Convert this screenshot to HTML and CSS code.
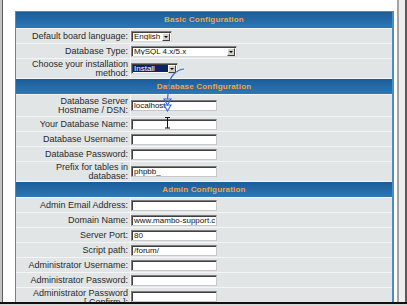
FILE: index.html
```html
<!DOCTYPE html>
<html>
<head>
<meta charset="utf-8">
<link rel="stylesheet" href="styles.css">
</head>
<body>
<div class="screen">
  <div class="main">
    <div class="edge-left"></div>
    <div class="content">
      <div class="cfg">
        <div class="hdr">Basic Configuration</div>
        <div class="lbl">Default board language:</div>
        <div class="val"><span class="sel w-en"><span class="opt">English</span><span class="btn"></span></span></div>
        <div class="lbl">Database Type:</div>
        <div class="val"><span class="sel w-db"><span class="opt">MySQL 4.x/5.x</span><span class="btn"></span></span></div>
        <div class="lbl tall">Choose your installation<br>method:</div>
        <div class="val tall"><span class="sel w-in"><span class="opt hl">Install</span><span class="btn"></span></span></div>

        <div class="hdr">Database Configuration</div>
        <div class="lbl tall2">Database Server<br>Hostname / DSN:</div>
        <div class="val tall2"><span class="inp">localhost</span></div>
        <div class="lbl">Your Database Name:</div>
        <div class="val"><span class="inp"></span></div>
        <div class="lbl">Database Username:</div>
        <div class="val"><span class="inp"></span></div>
        <div class="lbl">Database Password:</div>
        <div class="val"><span class="inp"></span></div>
        <div class="lbl tall">Prefix for tables in<br>database:</div>
        <div class="val tall"><span class="inp">phpbb_</span></div>

        <div class="hdr">Admin Configuration</div>
        <div class="lbl">Admin Email Address:</div>
        <div class="val"><span class="inp"></span></div>
        <div class="lbl">Domain Name:</div>
        <div class="val"><span class="inp">www.mambo-support.c</span></div>
        <div class="lbl">Server Port:</div>
        <div class="val"><span class="inp">80</span></div>
        <div class="lbl">Script path:</div>
        <div class="val"><span class="inp">/forum/</span></div>
        <div class="lbl">Administrator Username:</div>
        <div class="val"><span class="inp"></span></div>
        <div class="lbl">Administrator Password:</div>
        <div class="val"><span class="inp"></span></div>
        <div class="lbl tall">Administrator Password<br>[ Confirm ]:</div>
        <div class="val tall top"><span class="inp"></span></div>
      </div>
    </div>
    <div class="edge-right"></div>
  </div>
  <div class="bottom"></div>
  <svg class="mark" width="407" height="306" viewBox="0 0 407 306">
    <path d="M184 69 C176 70 170 76 169 85 L167.5 99" fill="none" stroke="#3366dd" stroke-width="1.2"/>
    <polygon points="164,99 171,99 167.5,105" fill="none" stroke="#3366dd" stroke-width="1.1"/>
    <polygon points="164,105 171,105 167.5,111" fill="none" stroke="#3366dd" stroke-width="1.1"/>
    <path d="M167.5 117.5 V128 M165 117.5 H170 M165 128 H170" fill="none" stroke="#111" stroke-width="1"/>
  </svg>
</div>
</body>
</html>
```
FILE: styles.css
```css
* { box-sizing: border-box; }
html, body { margin: 0; padding: 0; background: #fff; }
.screen {
  position: relative;
  width: 407px;
  height: 306px;
  overflow: hidden;
  display: flex;
  flex-direction: column;
  background: #fff;
  font-family: "Liberation Sans", Arial, sans-serif;
}
.main { display: flex; height: 302px; }
.edge-left {
  width: 3px;
  border-left: 2px solid #c4c4c4;
  border-right: 1px solid #5c5c5c;
}
.content {
  flex: 1;
  padding: 11px 0 0 12px;
  overflow: hidden;
}
.edge-right {
  width: 10px;
  border-left: 2px solid #a4a4a4;
  border-right: 2px solid #5a5a5a;
  background: #eeeeee;
  margin-left: 3px;
}
.bottom {
  height: 4px;
  border-top: 2px solid #111;
  background: #d8d8d8;
}
.cfg {
  width: 379px;
  display: grid;
  grid-template-columns: 114px 1fr;
  column-gap: 1px;
  row-gap: 1px;
  background: #f3f5f6;
  border-top: 1px solid #4a8dc4;
  border-left: 1px solid #4a8dc4;
  border-right: 2px solid #4a8dc4;
}
.hdr {
  grid-column: 1 / -1;
  height: 15px;
  background: linear-gradient(#1b5c98, #2d78b6);
  color: #f2a446;
  font-weight: bold;
  font-size: 8px;
  letter-spacing: 0.2px;
  text-align: center;
  line-height: 15px;
}
.cfg > .hdr:first-child { height: 16px; line-height: 16px; }
.lbl, .val {
  background: #e1e5e6;
  height: 14px;
  display: flex;
  align-items: center;
  font-size: 9px;
  color: #2a2a2a;
}
.lbl {
  justify-content: flex-end;
  text-align: right;
  padding-right: 2px;
  line-height: 9px;
  white-space: nowrap;
}
.tall { height: 19px; }
.tall2 { height: 21px; }
.val.top { align-items: flex-start; padding-top: 3px; }
.inp {
  display: block;
  width: 86px;
  height: 11px;
  background: #fff;
  border: 1px solid #7c7c7c;
  border-right-color: #c8c8c8;
  border-bottom-color: #c8c8c8;
  box-shadow: inset 1px 1px 0 #404040;
  font-size: 8px;
  line-height: 9px;
  padding-left: 2px;
  color: #111;
  white-space: nowrap;
  overflow: hidden;
}
.sel {
  display: flex;
  height: 11px;
  background: #fff;
  border: 1px solid #808080;
  border-right-color: #d8d8d8;
  border-bottom-color: #d8d8d8;
  box-shadow: inset 1px 1px 0 #404040;
  padding: 1px 1px 1px 1px;
}
.w-en { width: 41px; }
.w-db { width: 106px; }
.w-in { width: 47px; }
.opt {
  flex: 1;
  font-size: 8px;
  line-height: 8px;
  padding-left: 1px;
  color: #111;
  white-space: nowrap;
  overflow: hidden;
}
.opt.hl { background: #0a246a; color: #fff; }
.btn {
  width: 8px;
  height: 8px;
  background: #d4d0c8;
  border: 1px solid #fff;
  border-right-color: #404040;
  border-bottom-color: #404040;
  position: relative;
}
.btn::after {
  content: "";
  position: absolute;
  left: 1px;
  top: 2px;
  border-left: 2px solid transparent;
  border-right: 2px solid transparent;
  border-top: 2px solid #000;
}
.mark { position: absolute; left: 0; top: 0; pointer-events: none; }
```
